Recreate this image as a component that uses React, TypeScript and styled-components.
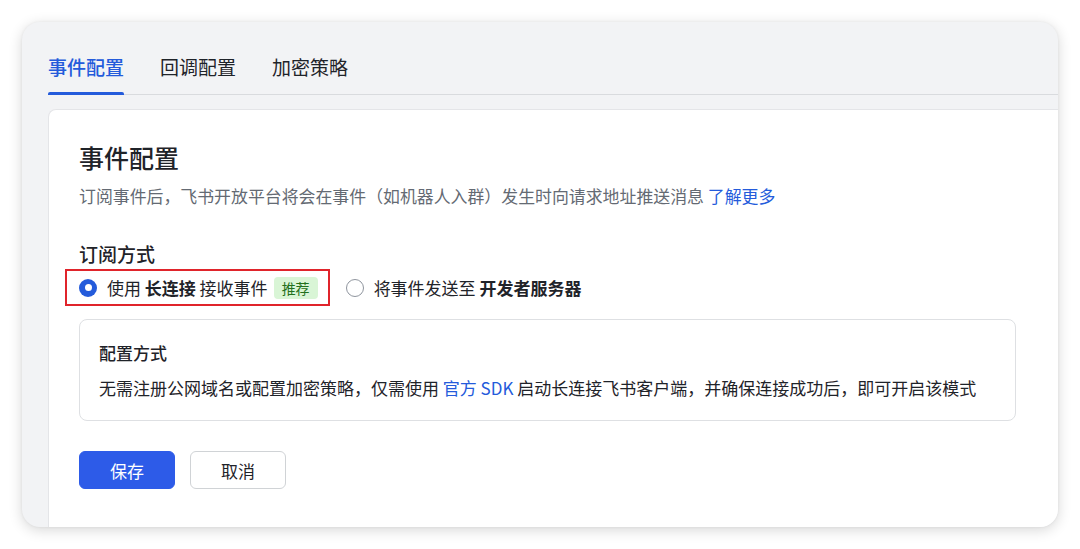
import React from "react";
import styled, { createGlobalStyle } from "styled-components";

const Global = createGlobalStyle`
  html, body { margin: 0; padding: 0; background: #ffffff; }
  body { font-family: "Noto Sans CJK SC", "Noto Sans", sans-serif; color: #1f2329; }
  * { box-sizing: border-box; }
`;

const Page = styled.div`
  width: 1080px;
  height: 549px;
  padding: 22px;
`;

const Window = styled.div`
  width: 1036px;
  height: 505px;
  border-radius: 18px;
  background: #f2f3f5;
  overflow: hidden;
  box-shadow: 0 3px 14px rgba(0, 0, 0, 0.16), 0 0 3px rgba(0, 0, 0, 0.06);
  padding: 32px 0 0 26px;
  display: flex;
  flex-direction: column;
`;

const TabBar = styled.div`
  display: flex;
  gap: 36px;
  border-bottom: 1px solid #d9dbde;
`;

const Tab = styled.div<{ $active?: boolean }>`
  position: relative;
  font-size: 19px;
  line-height: 26px;
  padding-bottom: 14px;
  color: ${(p) => (p.$active ? "#245bdb" : "#1f2329")};
  font-weight: ${(p) => (p.$active ? 500 : 400)};
  &::after {
    content: "";
    display: ${(p) => (p.$active ? "block" : "none")};
    position: absolute;
    left: 0;
    right: 0;
    bottom: -1px;
    height: 3px;
    border-radius: 2px 2px 0 0;
    background: #245bdb;
  }
`;

const Card = styled.div`
  margin-top: 14px;
  flex: 1;
  background: #ffffff;
  border-top: 1px solid #e4e5e8;
  border-left: 1px solid #e4e5e8;
  border-top-left-radius: 8px;
  padding: 30px 42px 0 30px;
`;

const Title = styled.h1`
  margin: 0;
  font-size: 25px;
  line-height: 34px;
  font-weight: 500;
  color: #1f2329;
`;

const Desc = styled.p`
  margin: 10px 0 0;
  font-size: 16.9px;
  line-height: 24px;
  color: #646a73;
`;

const Link = styled.a`
  color: #245bdb;
  text-decoration: none;
`;

const SectionLabel = styled.div`
  margin-top: 33px;
  font-size: 19px;
  line-height: 26px;
  font-weight: 500;
  color: #1f2329;
`;

const RadioGroup = styled.div`
  margin-top: 2px;
  margin-left: -14px;
  display: flex;
  align-items: center;
  gap: 16px;
`;

const Highlight = styled.div`
  border: 2px solid #e0242b;
  padding: 0 10px 0 12px;
  height: 37px;
  display: flex;
  align-items: center;
`;

const RadioItem = styled.label`
  display: flex;
  align-items: center;
  font-size: 17px;
  line-height: 24px;
  color: #1f2329;
  white-space: pre;
`;

const Radio = styled.span<{ $checked?: boolean }>`
  width: 18px;
  height: 18px;
  border-radius: 50%;
  margin-right: 10px;
  flex: none;
  background: ${(p) => (p.$checked ? "#245bdb" : "#ffffff")};
  border: ${(p) => (p.$checked ? "none" : "1.5px solid #8f959e")};
  display: flex;
  align-items: center;
  justify-content: center;
  &::after {
    content: "";
    display: ${(p) => (p.$checked ? "block" : "none")};
    width: 7px;
    height: 7px;
    border-radius: 50%;
    background: #ffffff;
  }
`;

const Strong = styled.b`
  font-weight: 600;
`;

const Tag = styled.span`
  margin-left: 6px;
  height: 22px;
  padding: 0 8px;
  border-radius: 4px;
  background: #d9f5d6;
  color: #24701c;
  font-size: 14px;
  line-height: 22px;
`;

const InfoBox = styled.div`
  margin-top: 13px;
  border: 1px solid #dee0e3;
  border-radius: 8px;
  padding: 21px 19px 20px;
`;

const InfoTitle = styled.div`
  font-size: 17px;
  line-height: 24px;
  font-weight: 500;
  color: #1f2329;
`;

const InfoText = styled.div`
  margin-top: 11px;
  font-size: 17px;
  line-height: 24px;
  color: #1f2329;
`;

const Actions = styled.div`
  margin-top: 30px;
  display: flex;
  gap: 15px;
`;

const Button = styled.button<{ $primary?: boolean }>`
  width: 96px;
  height: 38px;
  border-radius: 6px;
  font-family: inherit;
  font-size: 17px;
  cursor: pointer;
  background: ${(p) => (p.$primary ? "#2d5be8" : "#ffffff")};
  color: ${(p) => (p.$primary ? "#ffffff" : "#1f2329")};
  border: ${(p) => (p.$primary ? "1px solid #2d5be8" : "1px solid #d0d3d6")};
`;

export default function App() {
  return (
    <>
      <Global />
      <Page>
        <Window>
          <TabBar>
            <Tab $active>事件配置</Tab>
            <Tab>回调配置</Tab>
            <Tab>加密策略</Tab>
          </TabBar>
          <Card>
            <Title>事件配置</Title>
            <Desc>
              订阅事件后，飞书开放平台将会在事件（如机器人入群）发生时向请求地址推送消息{" "}
              <Link href="#">了解更多</Link>
            </Desc>
            <SectionLabel>订阅方式</SectionLabel>
            <RadioGroup>
              <Highlight>
                <RadioItem>
                  <Radio $checked />
                  使用 <Strong>长连接</Strong> 接收事件
                  <Tag>推荐</Tag>
                </RadioItem>
              </Highlight>
              <RadioItem>
                <Radio />
                将事件发送至 <Strong>开发者服务器</Strong>
              </RadioItem>
            </RadioGroup>
            <InfoBox>
              <InfoTitle>配置方式</InfoTitle>
              <InfoText>
                无需注册公网域名或配置加密策略，仅需使用 <Link href="#">官方 SDK</Link>{" "}
                启动长连接飞书客户端，并确保连接成功后，即可开启该模式
              </InfoText>
            </InfoBox>
            <Actions>
              <Button $primary>保存</Button>
              <Button>取消</Button>
            </Actions>
          </Card>
        </Window>
      </Page>
    </>
  );
}
